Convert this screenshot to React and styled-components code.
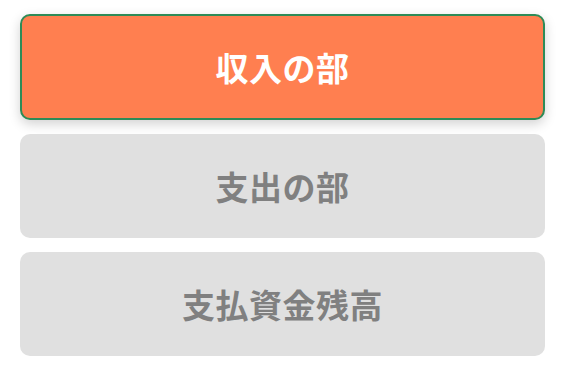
import React from "react";
import styled, { createGlobalStyle } from "styled-components";

const Global = createGlobalStyle`
  html, body { margin: 0; padding: 0; background: #ffffff; }
  body { font-family: "Noto Sans CJK JP", "Noto Sans", sans-serif; }
`;

const List = styled.div`
  display: flex;
  flex-direction: column;
  gap: 14px;
  padding: 14px 20px;
`;

const Tab = styled.button`
  box-sizing: border-box;
  width: 100%;
  height: ${(p) => (p.$active ? "106px" : "104px")};
  display: flex;
  align-items: center;
  justify-content: center;
  border-radius: 10px;
  border: ${(p) => (p.$active ? "2px solid #2e8b57" : "none")};
  background: ${(p) => (p.$active ? "#ff7f50" : "#e0e0e0")};
  color: ${(p) => (p.$active ? "#ffffff" : "#808080")};
  box-shadow: ${(p) => (p.$active ? "0 4px 12px rgba(0,0,0,0.18)" : "none")};
  font-family: "Noto Sans CJK JP", sans-serif;
  font-size: 33px;
  font-weight: 700;
  letter-spacing: 0.5px;
  padding: 0;
  cursor: pointer;
`;

const items = ["収入の部", "支出の部", "支払資金残高"];

export default function App() {
  return (
    <>
      <Global />
      <List>
        {items.map((t, i) => (
          <Tab key={t} $active={i === 0}>
            {t}
          </Tab>
        ))}
      </List>
    </>
  );
}
